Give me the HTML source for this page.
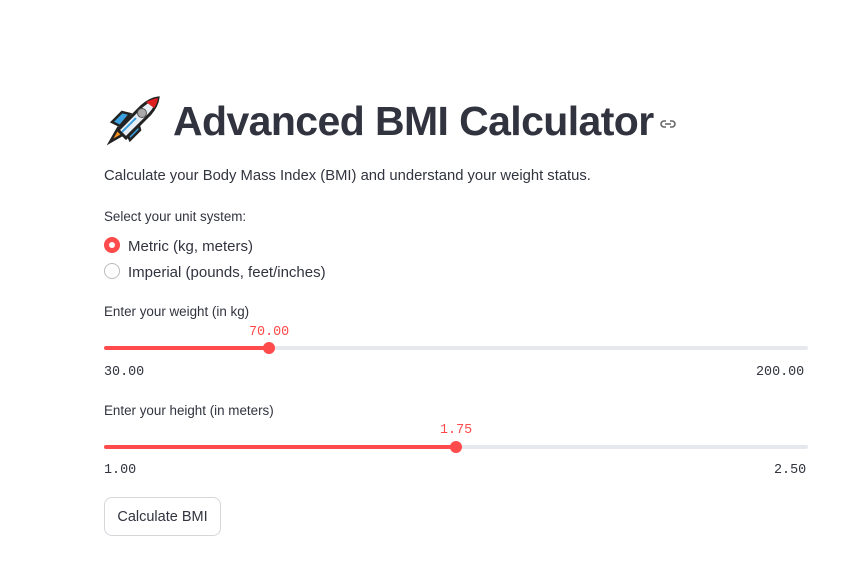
<!DOCTYPE html>
<html><head><meta charset="utf-8"><style>
body{margin:0;background:#fff;width:847px;height:576px;overflow:hidden;font-family:"Liberation Sans",sans-serif;color:#31333f;position:relative}
.a{position:absolute;white-space:nowrap}
.mono{font-family:"Liberation Mono",monospace;font-size:13.4px}
.track{position:absolute;left:104px;width:704px;height:4px;background:#e6e8ee;border-radius:2px}
.fill{position:absolute;left:0;top:0;height:4px;background:#ff4b4b;border-radius:2px}
.thumb{position:absolute;top:-4px;width:12px;height:12px;border-radius:50%;background:#ff4b4b;margin-left:-6px}
.lbl{font-size:13.4px}
</style></head><body>
<svg class="a" style="left:106px;top:96px" width="54" height="50" viewBox="0 0 54 50">
<path d="M12 32 L4 46 L18 38 Z" fill="#f7931e" stroke="#222" stroke-width="2.5"/>
<path d="M6 26 L16 16 L24 18 L14 30 Z" fill="#3aa0e0" stroke="#222" stroke-width="2.5"/>
<path d="M24 44 L34 34 L32 26 L20 36 Z" fill="#3aa0e0" stroke="#222" stroke-width="2.5"/>
<path d="M12 34 L36 10 Q44 3 52 2 Q51 10 44 18 L20 42 Z" fill="#e8eef4" stroke="#222" stroke-width="3"/>
<path d="M40 6 Q46 3 52 2 Q51 8 48 12 Z" fill="#e02020"/>
<circle cx="36" cy="17" r="4.5" fill="#aaa" stroke="#555" stroke-width="1"/>
<path d="M16 36 L30 22" stroke="#3aa0e0" stroke-width="2"/>
</svg>
<div class="a" style="left:173px;top:96px;font-size:41px;font-weight:bold;letter-spacing:-0.6px;line-height:50px">Advanced BMI Calculator</div>
<svg class="a" style="left:659px;top:118px" width="18" height="12" viewBox="0 0 18 12"><path d="M7 3H5a3 3 0 0 0 0 6h2M11 3h2a3 3 0 0 1 0 6h-2M6 6h6" fill="none" stroke="#666" stroke-width="1.6"/></svg>
<div class="a" style="left:104px;top:168px;font-size:14.8px">Calculate your Body Mass Index (BMI) and understand your weight status.</div>
<div class="a lbl" style="left:104px;top:209px">Select your unit system:</div>
<div class="a" style="left:104px;top:237px;width:16px;height:16px;border-radius:50%;background:#ff4b4b"><div style="margin:5px;width:6px;height:6px;border-radius:50%;background:#fff"></div></div>
<div class="a" style="left:128px;top:238px;font-size:15px">Metric (kg, meters)</div>
<div class="a" style="left:104px;top:263px;width:14px;height:14px;border-radius:50%;border:1px solid #bbb"></div>
<div class="a" style="left:128px;top:264px;font-size:15px">Imperial (pounds, feet/inches)</div>
<div class="a lbl" style="left:104px;top:304px">Enter your weight (in kg)</div>
<div class="a mono" style="left:249px;top:325px;color:#ff4b4b">70.00</div>
<div class="track" style="top:346px"><div class="fill" style="width:165px"></div><div class="thumb" style="left:165px"></div></div>
<div class="a mono" style="left:104px;top:365px">30.00</div>
<div class="a mono" style="left:756px;top:365px">200.00</div>
<div class="a lbl" style="left:104px;top:403px">Enter your height (in meters)</div>
<div class="a mono" style="left:440px;top:423px;color:#ff4b4b">1.75</div>
<div class="track" style="top:445px"><div class="fill" style="width:352px"></div><div class="thumb" style="left:352px"></div></div>
<div class="a mono" style="left:104px;top:463px">1.00</div>
<div class="a mono" style="left:774px;top:463px">2.50</div>
<div class="a" style="left:104px;top:497px;width:115px;height:37px;border:1px solid #d5d6da;border-radius:8px;font-size:14.5px;line-height:39px;text-align:center">Calculate BMI</div>
</body></html>
